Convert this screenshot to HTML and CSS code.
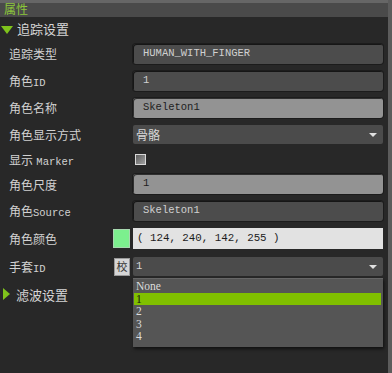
FILE: index.html
```html
<!DOCTYPE html>
<html lang="zh-CN">
<head>
    <meta charset="UTF-8">
    <title>属性</title>
    <link rel="stylesheet" href="styles.css">
</head>
<body>
    <div class="panel">
        <div class="top-strip"></div>
        <div class="panel-title">属性</div>

        <div class="section-head">
            <span class="arrow-down"></span>
            <span>追踪设置</span>
        </div>

        <div class="props">
            <div class="row r1">
                <div class="label"><span>追踪类型</span></div>
                <div class="field dark">HUMAN_WITH_FINGER</div>
            </div>
            <div class="row r2">
                <div class="label"><span>角色<span class="latin">ID</span></span></div>
                <div class="field dark">1</div>
            </div>
            <div class="row r3">
                <div class="label"><span>角色名称</span></div>
                <div class="field light">Skeleton1</div>
            </div>
            <div class="row r4">
                <div class="label"><span>角色显示方式</span></div>
                <div class="field select"><span class="cjk">骨骼</span><span class="caret"></span></div>
            </div>
            <div class="row r5">
                <div class="label"><span>显示 <span class="latin">Marker</span></span></div>
                <div class="checkbox"></div>
            </div>
            <div class="row r6">
                <div class="label"><span>角色尺度</span></div>
                <div class="field light">1</div>
            </div>
            <div class="row r7">
                <div class="label"><span>角色<span class="latin">Source</span></span></div>
                <div class="field dark">Skeleton1</div>
            </div>
            <div class="row r8">
                <div class="label with-extra"><span>角色颜色</span><span class="swatch"></span></div>
                <div class="field white">( 124, 240, 142, 255 )</div>
            </div>
            <div class="row r9">
                <div class="label with-extra"><span>手套<span class="latin">ID</span></span><span class="small-btn">校</span></div>
                <div class="field select">1<span class="caret"></span></div>
            </div>
        </div>

        <div class="section-head closed">
            <span class="arrow-right"></span>
            <span>滤波设置</span>
        </div>

        <ul class="dropdown">
            <li>None</li>
            <li class="active">1</li>
            <li>2</li>
            <li>3</li>
            <li>4</li>
        </ul>
    </div>
</body>
</html>
```

FILE: styles.css
```css
* {
    margin: 0;
    padding: 0;
    box-sizing: border-box;
}

body {
    background-color: #282828;
    font-family: "Liberation Sans", "Noto Sans CJK SC", sans-serif;
    color: #d2d2d2;
    width: 392px;
    height: 373px;
    overflow: hidden;
}

.panel {
    position: relative;
    height: 373px;
    border-right: 4px solid #5c5c5c;
}

.top-strip {
    height: 3px;
    background-color: #666;
}

.panel-title {
    height: 14px;
    line-height: 14px;
    background-color: #4a4a4a;
    color: #8cc63a;
    font-size: 12px;
    padding-left: 4px;
}

.section-head {
    display: flex;
    align-items: center;
    gap: 4px;
    height: 23px;
    padding-left: 1px;
    font-size: 13px;
    color: #d6d6d6;
}

.section-head.closed {
    height: 26px;
    padding-left: 3px;
    gap: 6px;
}

.arrow-down {
    width: 0;
    height: 0;
    border-left: 6px solid transparent;
    border-right: 6px solid transparent;
    border-top: 8px solid #7fc31c;
    margin-top: 2px;
}

.arrow-right {
    width: 0;
    height: 0;
    border-top: 6px solid transparent;
    border-bottom: 6px solid transparent;
    border-left: 7px solid #7fc31c;
}

.props {
    padding-right: 5px;
}

.row {
    display: flex;
    align-items: center;
    height: 27px;
}

.r4 { height: 26px; }
.r5 { height: 24px; }
.r6 { height: 26px; }
.r8 { height: 28px; }
.r9 { height: 29px; }

.label {
    width: 133px;
    flex-shrink: 0;
    padding-left: 9px;
    font-size: 12px;
    display: flex;
    align-items: center;
}

.with-extra {
    justify-content: space-between;
    padding-right: 3px;
}

.latin {
    font-family: "Liberation Mono", monospace;
    font-size: 10.5px;
}

.field {
    flex: 1;
    height: 20px;
    line-height: 19px;
    border-radius: 3px;
    padding-left: 10px;
    font-family: "Liberation Mono", "Noto Sans CJK SC", monospace;
    font-size: 10.5px;
    position: relative;
}

.dark {
    background-color: #4c4c4c;
    color: #d0d0d0;
    box-shadow: inset 1px 1px 0 #161616, 0 0 0 1px #1c1c1c;
}

.light {
    background-color: #939393;
    color: #1e1e1e;
    box-shadow: inset 1px 1px 0 #303030, 0 0 0 1px #1c1c1c;
}

.white {
    height: 21px;
    line-height: 21px;
    background-color: #e2e2e2;
    color: #1c1c1c;
    border-radius: 0;
    padding-left: 4px;
    font-size: 10.8px;
}

.select {
    height: 19px;
    background-color: #4b4b4b;
    color: #d8d8d8;
    padding-left: 3px;
    border-radius: 2px;
}

.cjk {
    font-family: "Noto Sans CJK SC", sans-serif;
    font-size: 12px;
}

.caret {
    position: absolute;
    right: 6px;
    top: 8px;
    width: 0;
    height: 0;
    border-left: 4px solid transparent;
    border-right: 4px solid transparent;
    border-top: 4px solid #e0e0e0;
}

.checkbox {
    width: 11px;
    height: 11px;
    margin-left: 2px;
    border: 1px solid #d8d8d8;
    background: linear-gradient(135deg, #5c5c5c, #a0a0a0);
}

.swatch {
    width: 17px;
    height: 19px;
    background-color: #7cf08e;
    border: 1px solid #a8d8b0;
}

.small-btn {
    width: 16px;
    height: 18px;
    line-height: 17px;
    text-align: center;
    background-color: #d6d6d6;
    color: #333;
    font-size: 11px;
    border: 1px solid #9a9a9a;
}

.dropdown {
    position: absolute;
    left: 133px;
    top: 278px;
    width: 250px;
    list-style: none;
    background-color: #555;
    padding: 1px 2px 4px 1px;
    box-shadow: 1px 2px 3px rgba(0, 0, 0, 0.6);
    border-top: 1px solid #666;
}

.dropdown li {
    height: 12.5px;
    line-height: 12.5px;
    padding-left: 2px;
    font-family: "Liberation Serif", serif;
    font-size: 11.5px;
    color: #dcdcdc;
}

.dropdown li.active {
    background-color: #80bf00;
    color: #111;
}
```
